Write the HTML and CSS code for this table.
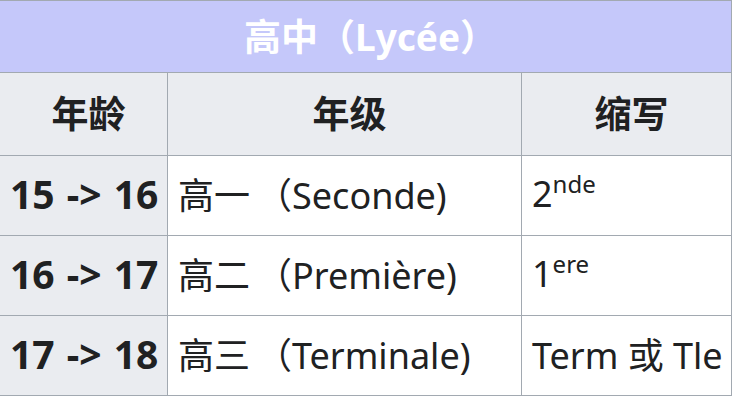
FILE: index.html
```html
<!DOCTYPE html>
<html lang="zh">
<head>
<meta charset="utf-8">
<link rel="stylesheet" href="styles.css">
</head>
<body>
<table class="lycee">
  <colgroup>
    <col class="c-age">
    <col class="c-grade">
    <col class="c-abbr">
  </colgroup>
  <tr class="title-row"><th colspan="3" class="title">高中（Lycée）</th></tr>
  <tr class="head-row"><th class="head">年龄</th><th class="head">年级</th><th class="head">缩写</th></tr>
  <tr class="row"><th class="age">15 -&gt; 16</th><td class="cell">高一<span class="paren">（</span>Seconde)</td><td class="cell">2<sup class="sup">nde</sup></td></tr>
  <tr class="row"><th class="age">16 -&gt; 17</th><td class="cell">高二<span class="paren">（</span>Première)</td><td class="cell">1<sup class="sup">ere</sup></td></tr>
  <tr class="row"><th class="age">17 -&gt; 18</th><td class="cell">高三<span class="paren">（</span>Terminale)</td><td class="cell">Term 或 Tle</td></tr>
</table>
</body>
</html>
```
FILE: styles.css
```css
html, body {
  margin: 0;
  padding: 0;
  background: #ffffff;
}
body {
  font-family: "Noto Sans", "Noto Sans CJK SC", sans-serif;
  color: #202122;
}
.lycee {
  border-collapse: collapse;
  width: 732px;
  table-layout: fixed;
  margin: 0 0 0 -1px;
}
.c-age { width: 168px; }
.c-grade { width: 354px; }
.c-abbr { width: 210px; }
.lycee th, .lycee td {
  border: 1px solid #a2a9b1;
  padding: 0 0 4px 10px;
  white-space: nowrap;
  overflow: hidden;
}
.title-row { height: 72px; }
.head-row { height: 83px; }
.row { height: 80px; }
.title {
  background: #c5c8fa;
  color: #ffffff;
  font-size: 37px;
  font-weight: bold;
  text-align: center;
  padding: 0 10px 10px 0;
  border-top: none;
}
.head {
  background: #eaecf0;
  font-size: 37px;
  font-weight: bold;
  text-align: center;
  padding: 0 0 4px 0;
}
.age {
  background: #eaecf0;
  font-size: 39px;
  font-weight: bold;
  text-align: left;
  padding-left: 9px;
  word-spacing: 2px;
}
.cell {
  background: #ffffff;
  font-size: 36px;
  text-align: left;
  padding-left: 10px;
}
.paren {
  margin-left: 6px;
}
.sup {
  font-size: 24px;
  vertical-align: 14px;
  line-height: 0;
}
```
